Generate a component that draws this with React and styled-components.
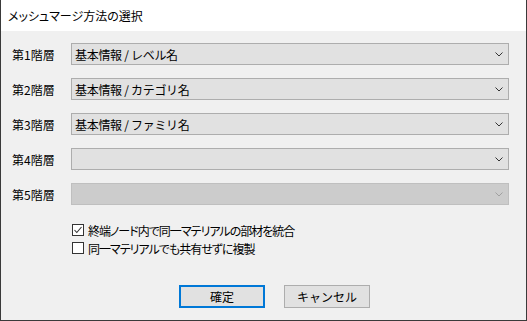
import React from "react";
import styled, { createGlobalStyle } from "styled-components";

const GlobalStyle = createGlobalStyle`
 html, body {
  margin: 0;
  padding: 0;
  background: #f0f0f0;
 }
 body {
  font-family: "Noto Sans CJK JP", "Noto Sans", sans-serif;
  font-size: 12px;
  color: #000000;
 }
`;

const Window = styled.div`
 width: 527px;
 height: 321px;
 box-sizing: border-box;
 border-left: 1px solid #3a3a3a;
 border-right: 1px solid #3a3a3a;
 border-bottom: 1px solid #3a3a3a;
 background: #f0f0f0;
 display: flex;
 flex-direction: column;
`;

const TitleBar = styled.div`
 height: 31px;
 background: #ffffff;
 display: flex;
 align-items: center;
 padding-left: 7px;
 font-size: 12px;
 font-feature-settings: "palt";
`;

const Body = styled.div`
 padding: 12px 17px 0 11px;
 display: flex;
 flex-direction: column;
`;

const LevelRow = styled.div`
 display: flex;
 align-items: center;
 height: 22px;
 margin-bottom: 13px;
`;

const Label = styled.span`
 width: 59px;
 flex-shrink: 0;
`;

const Combo = styled.div`
 flex: 1;
 height: 22px;
 box-sizing: border-box;
 border: 1px solid ${(p) => (p.$disabled ? "#bfbfbf" : "#adadad")};
 background: ${(p) => (p.$disabled ? "#cccccc" : "#e1e1e1")};
 display: flex;
 align-items: center;
 justify-content: space-between;
 padding: 0 5px 0 3px;
 letter-spacing: -0.3px;
`;

const ChevronIcon = ({ color }) => (
 <svg width="8" height="5" viewBox="0 0 8 5">
  <polyline points="0.5,0.5 4,4 7.5,0.5" fill="none" stroke={color} strokeWidth="1" />
 </svg>
);

const Options = styled.div`
 display: flex;
 flex-direction: column;
 gap: 6px;
 margin-top: 6px;
 padding-left: 60px;
`;

const CheckRow = styled.label`
 display: flex;
 align-items: center;
 height: 12px;
 gap: 4px;
 font-feature-settings: "palt";
 letter-spacing: -1px;
`;

const Box = styled.span`
 width: 12px;
 height: 12px;
 box-sizing: border-box;
 border: 1px solid #333333;
 background: #ffffff;
 display: flex;
 align-items: center;
 justify-content: center;
`;

const Buttons = styled.div`
 display: flex;
 justify-content: center;
 gap: 19px;
 margin-top: 31px;
 padding-left: 28px;
`;

const Button = styled.div`
 width: 86px;
 height: 23px;
 box-sizing: border-box;
 border: ${(p) => (p.$primary ? "2px solid #0078d7" : "1px solid #adadad")};
 background: #e1e1e1;
 display: flex;
 align-items: center;
 justify-content: center;
`;

const levels = [
 { label: "第1階層", value: "基本情報 / レベル名" },
 { label: "第2階層", value: "基本情報 / カテゴリ名" },
 { label: "第3階層", value: "基本情報 / ファミリ名" },
 { label: "第4階層", value: "" },
 { label: "第5階層", value: "", disabled: true },
];

function Check({ checked, children }) {
 return (
  <CheckRow>
   <Box>
    {checked && (
     <svg width="10" height="10" viewBox="0 0 10 10">
      <polyline points="1.5,5 3.8,7.5 8.5,2" fill="none" stroke="#333333" strokeWidth="1.1" />
     </svg>
    )}
   </Box>
   <span>{children}</span>
  </CheckRow>
 );
}

export default function App() {
 return (
  <>
   <GlobalStyle />
   <Window>
    <TitleBar>メッシュマージ方法の選択</TitleBar>
    <Body>
     {levels.map((lv) => (
      <LevelRow key={lv.label}>
       <Label>{lv.label}</Label>
       <Combo $disabled={lv.disabled}>
        <span>{lv.value}</span>
        <ChevronIcon color={lv.disabled ? "#a0a0a0" : "#333333"} />
       </Combo>
      </LevelRow>
     ))}
     <Options>
      <Check checked>終端ノード内で同一マテリアルの部材を統合</Check>
      <Check>同一マテリアルでも共有せずに複製</Check>
     </Options>
     <Buttons>
      <Button $primary>確定</Button>
      <Button>キャンセル</Button>
     </Buttons>
    </Body>
   </Window>
  </>
 );
}
